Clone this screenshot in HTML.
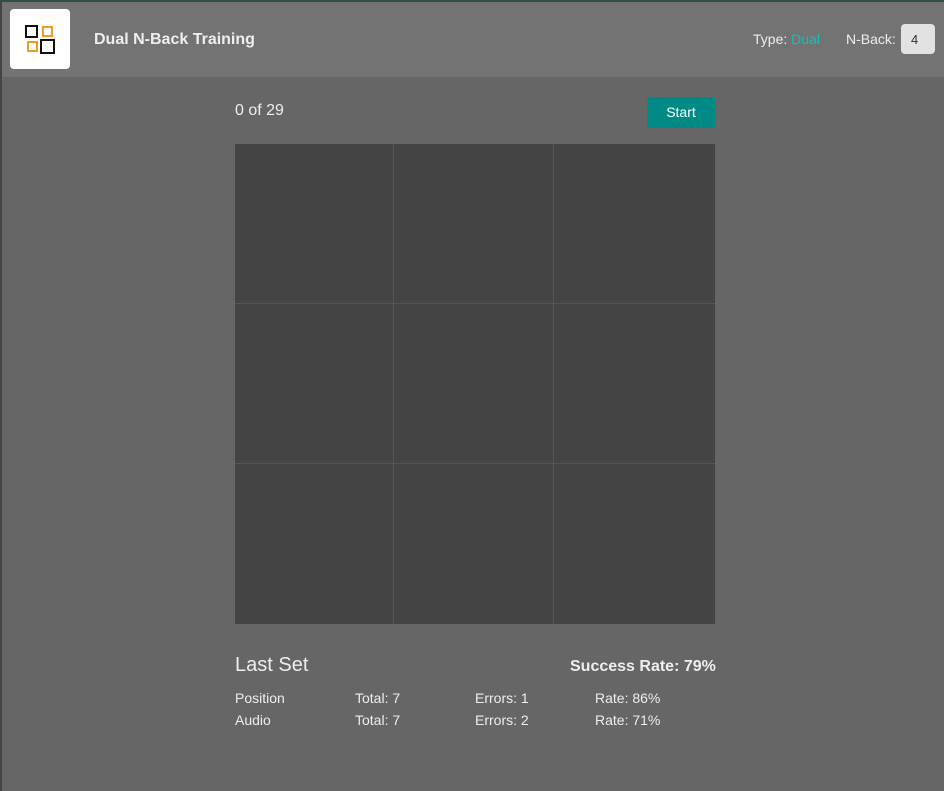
<!DOCTYPE html>
<html><head><style>
body{margin:0;width:944px;height:791px;background:#666;font-family:"Liberation Sans",Arial,sans-serif;overflow:hidden;position:relative;color:#eee}
.lb{position:absolute;left:0;top:0;width:2px;height:791px;background:#444}
.hdr{position:absolute;left:0;top:0;width:944px;height:77px;background:#737373;border-top:2px solid #2f4f4c;box-sizing:border-box}
.logo{position:absolute;left:10px;top:7px;width:60px;height:60px;background:#fff;border-radius:4px}
.sq{position:absolute;box-sizing:border-box}
.title{position:absolute;left:94px;font-size:16px;font-weight:bold;color:#eee}
.type{position:absolute;left:753px;font-size:14px;color:#eee}
.nb{position:absolute;left:846px;font-size:14px;color:#eee}
.inp{position:absolute;left:901px;width:34px;height:30px;background:#e2e2e2;border-radius:4px;box-sizing:border-box;font-size:13px;color:#333;padding:8px 0 0 10px}
.cnt{position:absolute;left:235px;top:102px;font-size:16px}
.btn{position:absolute;left:647px;top:97px;width:68px;height:31px;background:#008a85;border-radius:3px;color:#fff;font-size:14px;text-align:center;line-height:31px}
.grid{position:absolute;left:235px;top:144px;width:480px;height:480px;background:#555;display:grid;grid-template-columns:158px 159px 161px;grid-template-rows:159px 159px 160px;gap:1px}
.grid div{background:#444}
.ls{position:absolute;left:235px;top:654px;font-size:20px}
.sr{position:absolute;left:570px;top:658px;font-size:16px;font-weight:bold}
.r{position:absolute;font-size:14px}
</style></head><body>
<div class="hdr">
<div class="logo">
<div class="sq" style="left:15px;top:16px;width:13px;height:13px;border:2px solid #111"></div>
<div class="sq" style="left:32px;top:17px;width:11px;height:11px;border:2px solid #f39b1f"></div>
<div class="sq" style="left:17px;top:32px;width:11px;height:11px;border:2px solid #f39b1f"></div>
<div class="sq" style="left:30px;top:30px;width:15px;height:15px;border:2px solid #111"></div>
</div>
<div class="title" style="top:29px">Dual N-Back Training</div>
<div class="type" style="top:29px">Type: <span style="color:#1bbdb4">Dual</span></div>
<div class="nb" style="top:29px">N-Back:</div>
<div class="inp" style="top:22px">4</div>
</div>
<div class="lb"></div>
<div class="cnt">0 of 29</div>
<div class="btn">Start</div>
<div class="grid"><div></div><div></div><div></div><div></div><div></div><div></div><div></div><div></div><div></div></div>
<div class="ls">Last Set</div>
<div class="sr">Success Rate: 79%</div>
<div class="r" style="left:235px;top:690px">Position</div>
<div class="r" style="left:355px;top:690px">Total: 7</div>
<div class="r" style="left:475px;top:690px">Errors: 1</div>
<div class="r" style="left:595px;top:690px">Rate: 86%</div>
<div class="r" style="left:235px;top:712px">Audio</div>
<div class="r" style="left:355px;top:712px">Total: 7</div>
<div class="r" style="left:475px;top:712px">Errors: 2</div>
<div class="r" style="left:595px;top:712px">Rate: 71%</div>
</body></html>
